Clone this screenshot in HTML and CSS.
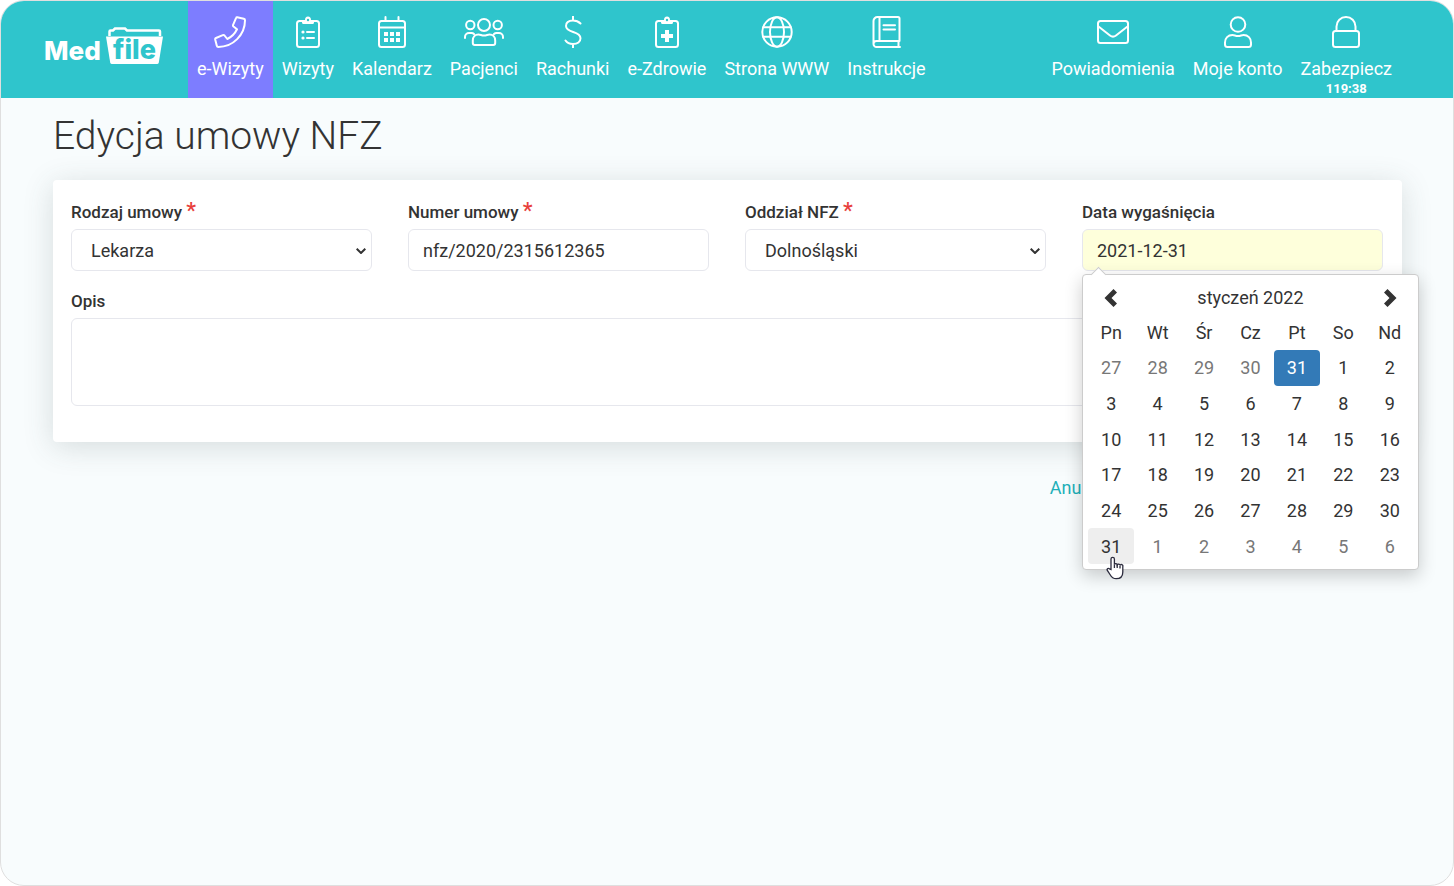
FILE: index.html
```html
<!DOCTYPE html>
<html lang="pl">
<head>
<meta charset="utf-8">
<title>Edycja umowy NFZ</title>
<link rel="stylesheet" href="styles.css">
</head>
<body>
<div class="page">
  <header class="topbar">
    <a class="logo" href="#" aria-label="MedFile">
      <svg width="120" height="40" viewBox="0 0 120 40">
        <path class="logo-shape" d="M62 9.500H119l-4.200 26q-.3 1.500-1.800 1.500H68q-1.500 0-1.800-1.500z"/>
        <path class="logo-line" d="M65.500 9V4.500q0-1 1-1H69L71 1.500H81L83 3.500H115q1 0 1 1V9"/>
        <text class="logo-med" x="0" y="33">Med</text>
        <text class="logo-file" x="69" y="32">file</text>
      </svg>
    </a>
    <nav class="menu">
      <a class="item active" href="#">
        <svg class="icon" width="32" height="32" viewBox="0 0 32 32"><path d="M23.200 1.300l6.600 1.500q1.200.3 1.200 1.500C31 19 19 31 4.300 31q-1.200 0-1.500-1.200L1.200 23.500q-.2-1 .8-1.500l6.800-2.900q1-.4 1.700.4l2.800 3.500c4.300-2 7.600-5.300 9.700-9.700l-3.500-2.800q-.8-.7-.4-1.700l2.900-6.700q.4-1 1.200-.8z"/></svg>
        <span>e-Wizyty</span>
      </a>
      <a class="item" href="#">
        <svg class="icon" width="32" height="32" viewBox="0 0 32 32"><rect x="5" y="5" width="22" height="26" rx="2.500"/><path class="fill" d="M10 4h3a3 3.500 0 0 1 6 0h3v2.500q0 1.500-1.500 1.500h-9Q10 8 10 6.500z"/><circle class="hole" cx="16" cy="4" r="1.200"/><path d="M15 16h7M15 22h7"/><circle class="fill" cx="11" cy="16" r="1.600"/><circle class="fill" cx="11" cy="22" r="1.600"/></svg>
        <span>Wizyty</span>
      </a>
      <a class="item" href="#">
        <svg class="icon" width="32" height="32" viewBox="0 0 32 32"><rect x="3" y="5" width="26" height="26" rx="2.500"/><path d="M3 11.500h26M9.500 1v4M22.500 1v4"/><path class="fill" d="M8 16h4v4H8zM14 16h4v4h-4zM20 16h4v4h-4zM8 22h4v4H8zM14 22h4v4h-4zM20 22h4v4h-4z"/></svg>
        <span>Kalendarz</span>
      </a>
      <a class="item" href="#">
        <svg class="icon" width="40" height="32" viewBox="0 0 40 32"><circle cx="20" cy="9" r="6"/><circle cx="6.300" cy="9" r="4.200"/><circle cx="33.700" cy="9" r="4.200"/><path d="M14.500 18.500c2 0 3 1 5.500 1s3.500-1 5.500-1c3.500 0 5.700 2.500 5.700 6v2.500q0 2-2 2H10.800q-2 0-2-2v-2.500c0-3.500 2.200-6 5.700-6zM1 22v-1a4 4 0 0 1 4-4h2.500q1.500 0 2.500 1M39 22v-1a4 4 0 0 0-4-4h-2.500q-1.500 0-2.500 1"/></svg>
        <span>Pacjenci</span>
      </a>
      <a class="item" href="#">
        <svg class="icon" width="32" height="32" viewBox="0 0 32 32"><path d="M23.500 7.500C21.500 5.500 19.500 4.500 16 4.500c-4.500 0-7 2.200-7 5.500 0 3.500 3 4.700 7.200 6s7.300 2.700 7.300 6.200-3 5.800-7.500 5.800c-3.500 0-6-1.200-7.500-3.500M16 0v4.500M16 28v4"/></svg>
        <span>Rachunki</span>
      </a>
      <a class="item" href="#">
        <svg class="icon" width="32" height="32" viewBox="0 0 32 32"><rect x="5" y="5" width="22" height="26" rx="2.500"/><path class="fill" d="M10 4h3a3 3.500 0 0 1 6 0h3v2.500q0 1.500-1.500 1.500h-9Q10 8 10 6.500z"/><circle class="hole" cx="16" cy="4" r="1.200"/><path class="fill" d="M14 14h4v4h4v4h-4v4h-4v-4h-4v-4h4z"/></svg>
        <span>e-Zdrowie</span>
      </a>
      <a class="item" href="#">
        <svg class="icon" width="32" height="32" viewBox="0 0 32 32"><circle cx="16" cy="16" r="14.700"/><ellipse cx="16" cy="16" rx="7" ry="14.700"/><path d="M2.300 11.200h27.400M2.300 20.800h27.400"/></svg>
        <span>Strona WWW</span>
      </a>
      <a class="item" href="#">
        <svg class="icon" width="32" height="32" viewBox="0 0 32 32"><path d="M29 25H6.500a3 3 0 0 0 0 6H30M28.500 25v6M3.500 28V5a4 4 0 0 1 4-4H28q1.500 0 1.500 1.500V25M9.500 1v24M13.500 9.200h11.500M13.500 13.500h11.500"/></svg>
        <span>Instrukcje</span>
      </a>
    </nav>
    <nav class="menu account">
      <a class="item" href="#">
        <svg class="icon" width="32" height="32" viewBox="0 0 32 32"><rect x="1" y="5" width="30" height="22" rx="2.500"/><path d="M1.500 10.500l11.500 9q3 2.300 6 0l11.500-9"/></svg>
        <span>Powiadomienia</span>
      </a>
      <a class="item" href="#">
        <svg class="icon" width="32" height="32" viewBox="0 0 32 32"><circle cx="16" cy="8.500" r="7.300"/><path d="M10.500 19c2 0 3 1 5.500 1s3.500-1 5.500-1c4.500 0 7.500 3.200 7.500 7.500v2q0 2.500-2.500 2.500h-21Q3 31 3 28.500v-2c0-4.300 3-7.500 7.500-7.500z"/></svg>
        <span>Moje konto</span>
      </a>
      <a class="item" href="#">
        <svg class="icon" width="32" height="32" viewBox="0 0 32 32"><rect x="3" y="15" width="26" height="16" rx="2.500"/><path d="M6.500 15v-4.500a9.500 9.500 0 0 1 19 0V15"/></svg>
        <span>Zabezpiecz</span>
        <strong class="timer">119:38</strong>
      </a>
    </nav>
  </header>

  <main class="content">
    <h1 class="title">Edycja umowy NFZ</h1>
    <form class="form">
      <section class="card">
        <div class="field">
          <label for="kind">Rodzaj umowy <span class="required">*</span></label>
          <div class="dropdown">
            <select class="control" id="kind"><option>Lekarza</option></select>
            <svg class="chevron" width="10" height="6" viewBox="0 0 10 6"><path d="M.7.7L5 5 9.300.7"/></svg>
          </div>
        </div>
        <div class="field">
          <label for="number">Numer umowy <span class="required">*</span></label>
          <input class="control" id="number" type="text" value="nfz/2020/2315612365">
        </div>
        <div class="field">
          <label for="branch">Oddział NFZ <span class="required">*</span></label>
          <div class="dropdown">
            <select class="control" id="branch"><option>Dolnośląski</option></select>
            <svg class="chevron" width="10" height="6" viewBox="0 0 10 6"><path d="M.7.7L5 5 9.300.7"/></svg>
          </div>
        </div>
        <div class="field">
          <label for="expiry">Data wygaśnięcia</label>
          <input class="control highlighted" id="expiry" type="text" value="2021-12-31">
          <div class="picker">
            <table class="calendar">
              <thead>
                <tr>
                  <th><button class="arrow" type="button" aria-label="Poprzedni miesiąc"><svg width="14" height="18" viewBox="0 0 14 18"><path d="M9.500 0L13 3.500 7.500 9l5.500 5.500L9.500 18 .5 9z"/></svg></button></th>
                  <th colspan="5">styczeń 2022</th>
                  <th><button class="arrow" type="button" aria-label="Następny miesiąc"><svg width="14" height="18" viewBox="0 0 14 18"><path d="M4.500 0L1 3.500 6.500 9 1 14.500 4.500 18l9-9z"/></svg></button></th>
                </tr>
                <tr><th>Pn</th><th>Wt</th><th>Śr</th><th>Cz</th><th>Pt</th><th>So</th><th>Nd</th></tr>
              </thead>
              <tbody>
                <tr><td class="other">27</td><td class="other">28</td><td class="other">29</td><td class="other">30</td><td class="selected">31</td><td>1</td><td>2</td></tr>
                <tr><td>3</td><td>4</td><td>5</td><td>6</td><td>7</td><td>8</td><td>9</td></tr>
                <tr><td>10</td><td>11</td><td>12</td><td>13</td><td>14</td><td>15</td><td>16</td></tr>
                <tr><td>17</td><td>18</td><td>19</td><td>20</td><td>21</td><td>22</td><td>23</td></tr>
                <tr><td>24</td><td>25</td><td>26</td><td>27</td><td>28</td><td>29</td><td>30</td></tr>
                <tr><td class="hovered">31<svg class="pointer" width="18" height="24" viewBox="0 0 18 24"><path d="M5 13.500V3a1.700 1.700 0 0 1 3.400 0v5.500a1.500 1.500 0 0 1 2.800.4 1.500 1.500 0 0 1 2.800.7 1.400 1.400 0 0 1 2.800.9V16c0 4.200-2.600 6.700-6.600 6.700-3.400 0-4.800-1.700-6.200-4.200L1.200 14.200c-.6-1.500 1.200-2.400 2.300-1.300z"/><path d="M8.400 8.500V12M11.200 9v3M14 10v2.500"/></svg></td><td class="other">1</td><td class="other">2</td><td class="other">3</td><td class="other">4</td><td class="other">5</td><td class="other">6</td></tr>
              </tbody>
            </table>
          </div>
        </div>
        <div class="field wide">
          <label for="description">Opis</label>
          <textarea class="control area" id="description"></textarea>
        </div>
      </section>
      <div class="actions"><a class="cancel" href="#">Anuluj</a></div>
    </form>
  </main>
</div>
</body>
</html>
```
FILE: styles.css
```css
* {
  box-sizing: border-box;
}

body {
  margin: 0;
  background: #fff;
  color: #333;
  font: 18px/27px Roboto, "Noto Sans", sans-serif;
}

a {
  text-decoration: none;
}

.page {
  min-height: 100vh;
  overflow: hidden;
  border: 1px solid #dfdfdf;
  border-radius: 24px;
  background: #f8fcfd;
}

/* Top bar */

.topbar {
  display: flex;
  min-height: 97px;
  padding: 0 52px 0 43px;
  background: #2fc5cc;
}

.logo {
  flex: none;
  width: 120px;
  margin: 26px 24px 0 0;
}

.logo svg {
  display: block;
}

.logo-shape {
  fill: #fff;
}

.logo-line {
  fill: none;
  stroke: #fff;
  stroke-width: 2.5;
}

.logo-med,
.logo-file {
  font: 800 26px Inter, sans-serif;
  fill: #fff;
}

.logo-file {
  font-size: 27px;
  fill: #2fc5cc;
}

.menu {
  display: flex;
}

.account {
  margin-left: auto;
}

.item {
  display: flex;
  flex-direction: column;
  align-items: center;
  padding: 15px 9px 0;
  color: #fff;
  white-space: nowrap;
}

.active {
  background: #7d7dff;
}

.icon {
  flex: none;
  margin-bottom: 7px;
  fill: none;
  stroke: #fff;
  stroke-width: 2;
  stroke-linecap: round;
  stroke-linejoin: round;
}

.icon .fill {
  fill: #fff;
  stroke: none;
}

.icon .hole {
  fill: #2fc5cc;
  stroke: none;
}

.timer {
  font-size: 13px;
  line-height: 13px;
}

/* Form */

.content {
  padding: 0 51px 0 52px;
}

.title {
  margin: 0;
  padding: 14px 0 19px;
  font-size: 39px;
  font-weight: 300;
  line-height: 49px;
}

.card {
  display: grid;
  grid-template-columns: repeat(4, minmax(0, 1fr));
  gap: 18px 36px;
  padding: 20px 19px 36px 18px;
  border-radius: 4px;
  background: #fff;
  box-shadow: 0 5px 30px rgba(60, 80, 80, 0.18);
}

.field {
  position: relative;
  display: flex;
  flex-direction: column;
  gap: 4px;
}

.wide {
  grid-column: 1 / -1;
}

.field label {
  font-size: 17px;
  font-weight: 500;
  line-height: 25px;
}

.required {
  color: #e8403c;
  font-size: 22px;
  line-height: 20px;
}

.control {
  display: block;
  width: 100%;
  height: 42px;
  padding: 0 14px;
  border: 1px solid #e6e7ed;
  border-radius: 6px;
  outline: 0;
  background: #fff;
  color: #333;
  font: inherit;
}

.dropdown {
  position: relative;
}

.dropdown .control {
  padding: 0 24px 0 19px;
  appearance: none;
}

.chevron {
  position: absolute;
  top: 19px;
  right: 6px;
  fill: none;
  stroke: #333;
  stroke-width: 2;
  pointer-events: none;
}

.highlighted {
  background: #feffdb;
}

.area {
  height: 88px;
  resize: none;
}

.actions {
  display: flex;
  justify-content: flex-end;
  padding: 32px 302px 0 0;
}

.cancel {
  color: #1fb0b9;
}

/* Date picker */

.picker {
  position: absolute;
  z-index: 1;
  top: 100%;
  left: 0;
  width: 337px;
  margin-top: 3px;
  padding: 5px;
  border: 1px solid #ccc;
  border-radius: 4px;
  background: #fff;
  box-shadow: 0 6px 18px rgba(0, 0, 0, 0.2);
}

.picker::before {
  content: "";
  position: absolute;
  top: -6px;
  left: 10px;
  width: 10px;
  height: 10px;
  border: solid #ccc;
  border-width: 1px 0 0 1px;
  background: #fff;
  transform: rotate(45deg);
}

.calendar {
  position: relative;
  width: 100%;
  height: 284px;
  border-spacing: 0;
  table-layout: fixed;
}

.calendar th,
.calendar td {
  height: 35px;
  padding: 0;
  border-radius: 4px;
  font-weight: 400;
  text-align: center;
}

.calendar .other {
  color: #777;
}

.calendar .selected {
  background: #337ab7;
  color: #fff;
}

.calendar .hovered {
  position: relative;
  background: #eee;
}

.arrow {
  display: block;
  margin: 0 auto;
  padding: 0;
  border: 0;
  background: none;
}

.arrow svg {
  display: block;
  fill: #333;
}

.pointer {
  position: absolute;
  top: 28px;
  left: 18px;
  fill: #fff;
  stroke: #2b2b3d;
  stroke-width: 1.3;
}
```
